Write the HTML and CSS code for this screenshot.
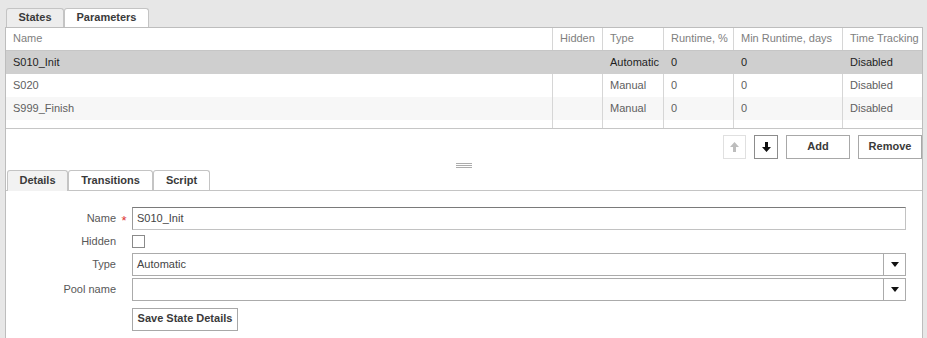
FILE: index.html
```html
<!DOCTYPE html>
<html>
<head>
<meta charset="utf-8">
<link rel="stylesheet" href="styles.css">
</head>
<body>
<div class="tabbar-top">
  <div class="tab active w-states">States</div>
  <div class="tab w-params">Parameters</div>
</div>
<div class="panel">
  <div class="grid">
    <div class="grid-head">
      <div class="cell">Name</div>
      <div class="cell">Hidden</div>
      <div class="cell">Type</div>
      <div class="cell">Runtime, %</div>
      <div class="cell">Min Runtime, days</div>
      <div class="cell">Time Tracking</div>
    </div>
    <div class="grid-body">
      <div class="grid-row selected">
        <div class="cell">S010_Init</div>
        <div class="cell"></div>
        <div class="cell">Automatic</div>
        <div class="cell">0</div>
        <div class="cell">0</div>
        <div class="cell">Disabled</div>
      </div>
      <div class="grid-row">
        <div class="cell">S020</div>
        <div class="cell"></div>
        <div class="cell">Manual</div>
        <div class="cell">0</div>
        <div class="cell">0</div>
        <div class="cell">Disabled</div>
      </div>
      <div class="grid-row alt">
        <div class="cell">S999_Finish</div>
        <div class="cell"></div>
        <div class="cell">Manual</div>
        <div class="cell">0</div>
        <div class="cell">0</div>
        <div class="cell">Disabled</div>
      </div>
      <div class="grid-row filler">
        <div class="cell"></div>
        <div class="cell"></div>
        <div class="cell"></div>
        <div class="cell"></div>
        <div class="cell"></div>
        <div class="cell"></div>
      </div>
    </div>
  </div>

  <div class="toolbar">
    <button class="btn icon-btn disabled w-up" aria-label="Move up">
      <svg width="9" height="10" viewBox="0 0 9 10"><path d="M4.5 0 L9 5 H6 V10 H3 V5 H0 Z" fill="#bdbdbd"/></svg>
    </button>
    <button class="btn icon-btn w-down" aria-label="Move down">
      <svg width="9" height="10" viewBox="0 0 9 10"><path d="M4.5 10 L9 5 H6 V0 H3 V5 H0 Z" fill="#111"/></svg>
    </button>
    <button class="btn w-wide">Add</button>
    <button class="btn w-wide">Remove</button>
  </div>

  <div class="splitter">
    <div class="grip"></div>
  </div>

  <div class="tabbar-sub">
    <div class="tab active w-details">Details</div>
    <div class="tab w-trans">Transitions</div>
    <div class="tab w-script">Script</div>
  </div>

  <div class="form">
    <div class="label">Name</div>
    <div class="req">*</div>
    <div class="input">S010_Init</div>

    <div class="label">Hidden</div>
    <div></div>
    <div class="check-wrap"><span class="checkbox"></span></div>

    <div class="label">Type</div>
    <div></div>
    <div class="select"><span class="select-text">Automatic</span><span class="select-btn"><svg width="8" height="5" viewBox="0 0 8 5"><path d="M0 0 H8 L4 5 Z" fill="#111"/></svg></span></div>

    <div class="label">Pool name</div>
    <div></div>
    <div class="select"><span class="select-text"></span><span class="select-btn"><svg width="8" height="5" viewBox="0 0 8 5"><path d="M0 0 H8 L4 5 Z" fill="#111"/></svg></span></div>

    <div></div>
    <div></div>
    <div class="save-wrap"><button class="btn save">Save State Details</button></div>
  </div>
</div>
</body>
</html>
```

FILE: styles.css
```css
* { box-sizing: border-box; }

body {
  margin: 0;
  background: #e7e7e7;
  font-family: "Liberation Sans", Arial, sans-serif;
  font-size: 11px;
  color: #555;
  height: 338px;
  overflow: hidden;
}

.tabbar-top {
  height: 27px;
  padding: 8px 0 0 6px;
  display: flex;
  align-items: flex-end;
}

.tab {
  height: 19px;
  border: 1px solid #c4c4c4;
  border-bottom: none;
  border-radius: 3px 3px 0 0;
  background: #fff;
  font-weight: bold;
  color: #3a3a3a;
  text-align: center;
  line-height: 17px;
}

.tab.active { background: #ededed; }

.w-states { width: 58px; }
.w-params { width: 85px; }
.w-details { width: 61px; }
.w-trans { width: 85px; }
.w-script { width: 57px; }

.panel {
  margin-left: 5px;
  width: 918px;
  height: 311px;
  background: #fff;
  border: 1px solid #bdbdbd;
  border-bottom: none;
}

.grid-head,
.grid-row {
  display: grid;
  grid-template-columns: 546px 50px 61px 70px 109px 78px;
}

.cell {
  padding-left: 7px;
  border-left: 1px solid #d6d6d6;
  white-space: nowrap;
  overflow: hidden;
}

.cell:first-child { border-left: none; }

.grid-head {
  height: 23px;
  line-height: 21px;
  border-bottom: 1px solid #c6c6c6;
  color: #808080;
}

.grid-body { border-bottom: 1px solid #c6c6c6; }

.grid-row {
  height: 23px;
  line-height: 22px;
  color: #606060;
}

.grid-row.selected { background: #cfcfcf; color: #1e1e1e; }
.grid-row.selected .cell { border-left-color: #cfcfcf; }
.grid-row.alt { background: #f7f7f7; }
.grid-row.filler { height: 8px; }

.toolbar {
  margin-top: 6px;
  height: 24px;
  display: flex;
  justify-content: flex-end;
  gap: 8px;
}

.btn {
  height: 24px;
  border: 1px solid #a8a8a8;
  background: #fff;
  font-family: "Liberation Sans", Arial, sans-serif;
  font-size: 11px;
  font-weight: bold;
  color: #3a3a3a;
  padding: 0;
  margin: 0;
  border-radius: 0;
}

.icon-btn {
  display: flex;
  align-items: center;
  justify-content: center;
}

.icon-btn.disabled { border-color: #e0e0e0; }

.w-up { width: 23px; }
.w-down { width: 24px; border-color: #8c8c8c; }
.w-wide { width: 64px; line-height: 18px; padding-bottom: 3px; }

.splitter {
  height: 11px;
  padding-top: 4px;
  display: flex;
  justify-content: center;
}

.grip {
  width: 16px;
  height: 5px;
  background: linear-gradient(#acacac 0 1px, transparent 1px 2px, #acacac 2px 3px, transparent 3px 4px, #acacac 4px 5px);
}

.tabbar-sub {
  height: 21px;
  padding-left: 1px;
  display: flex;
  align-items: flex-end;
  border-bottom: 1px solid #c4c4c4;
}

.tabbar-sub .tab { height: 20px; line-height: 19px; }
.tabbar-sub .tab.active { height: 21px; margin-bottom: -1px; background: #f2f2f2; }

.form {
  padding: 16px 16px 0 0;
  display: grid;
  grid-template-columns: 110px 16px 1fr;
  grid-template-rows: 23px 19px 23px 23px 28px;
  row-gap: 2px;
}

.label {
  text-align: right;
  align-self: center;
  color: #585858;
  padding-bottom: 1px;
}

.req {
  color: #d33;
  font-size: 13px;
  text-align: center;
  align-self: center;
  padding-top: 3px;
}

.input {
  border: 1px solid #c2c2c2;
  border-top-color: #7a7a7a;
  border-left-color: #9a9a9a;
  padding-left: 4px;
  line-height: 20px;
  color: #444;
}

.check-wrap { display: flex; align-items: center; }

.checkbox {
  display: block;
  width: 13px;
  height: 13px;
  border: 1px solid #8a8a8a;
  background: #fff;
}

.select {
  display: flex;
  border: 1px solid #ababab;
}

.select-text {
  flex: 1;
  padding-left: 4px;
  line-height: 20px;
  color: #444;
}

.select-btn {
  width: 22px;
  border-left: 1px solid #ababab;
  display: flex;
  align-items: center;
  justify-content: center;
}

.save-wrap { padding-top: 5px; }

.save {
  width: 106px;
  height: 23px;
  line-height: 18px;
  padding-bottom: 3px;
}
```
